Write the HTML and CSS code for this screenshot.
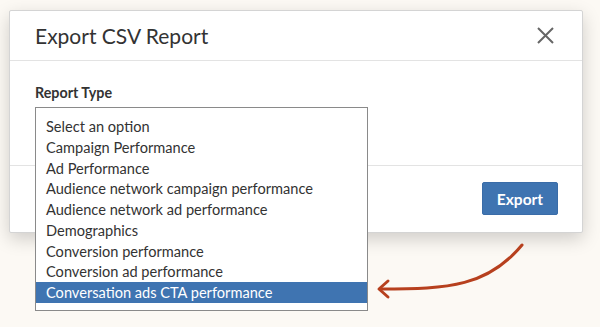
FILE: index.html
```html
<!DOCTYPE html>
<html>
<head>
<meta charset="utf-8">
<link rel="stylesheet" href="styles.css">
</head>
<body>
<div class="modal">
  <div class="modal-header">
    <h1 class="modal-title">Export CSV Report</h1>
    <button class="close" aria-label="Close">
      <svg width="17" height="17" viewBox="0 0 17 17"><path d="M1 1 L16 16 M16 1 L1 16" stroke="#666" stroke-width="2" fill="none"/></svg>
    </button>
  </div>
  <div class="modal-body">
    <label class="field-label">Report Type</label>
    <div class="listbox">
      <div class="option">Select an option</div>
      <div class="option">Campaign Performance</div>
      <div class="option">Ad Performance</div>
      <div class="option">Audience network campaign performance</div>
      <div class="option">Audience network ad performance</div>
      <div class="option">Demographics</div>
      <div class="option">Conversion performance</div>
      <div class="option">Conversion ad performance</div>
      <div class="option selected">Conversation ads CTA performance</div>
    </div>
  </div>
  <div class="modal-footer">
    <button class="btn-primary">Export</button>
  </div>
</div>
<svg class="arrow" width="600" height="327" viewBox="0 0 600 327">
  <path d="M522 245 C 488 286, 450 289, 380 289" stroke="#b7401e" stroke-width="3" fill="none" stroke-linecap="round"/>
  <path d="M388 281 L379 289 L388 297" stroke="#b7401e" stroke-width="3" fill="none" stroke-linecap="round" stroke-linejoin="round"/>
</svg>
</body>
</html>
```

FILE: styles.css
```css
* { box-sizing: border-box; }
html, body { margin: 0; padding: 0; }
body {
  background: #fcf9f4;
  width: 600px;
  height: 327px;
  overflow: hidden;
  font-family: Lato, "Open Sans", sans-serif;
  color: #333;
  position: relative;
  padding: 10px 0 0 9px;
}
.modal {
  width: 574px;
  height: 223px;
  background: #fff;
  border: 1px solid #d4d4d4;
  border-radius: 2px;
  box-shadow: 0 6px 18px rgba(0,0,0,0.18);
  display: flex;
  flex-direction: column;
}
.modal-header {
  height: 50px;
  border-bottom: 1px solid #e3e3e3;
  display: flex;
  align-items: center;
  justify-content: space-between;
  padding: 0 28px 0 25px;
}
.modal-title {
  margin: 0;
  font-size: 21px;
  font-weight: 400;
  color: #333;
  letter-spacing: 0;
}
.close {
  border: 0;
  background: none;
  padding: 0;
  width: 17px;
  height: 17px;
  display: flex;
}
.modal-body {
  height: 105px;
  border-bottom: 1px solid #e3e3e3;
  padding: 24px 25px 0;
  position: relative;
}
.field-label {
  display: block;
  font-size: 14.3px;
  font-weight: 700;
  color: #333;
  line-height: 16px;
}
.listbox {
  position: absolute;
  left: 25px;
  top: 46px;
  width: 333px;
  background: #fff;
  border: 1px solid #8a8a8a;
  padding: 8px 0 7px;
  z-index: 2;
}
.option {
  height: 20.75px;
  line-height: 22px;
  font-size: 14.6px;
  padding-left: 10px;
  color: #333;
  white-space: nowrap;
}
.option.selected {
  background: #3f74b1;
  color: #fff;
}
.modal-footer {
  flex: 1;
  display: flex;
  justify-content: flex-end;
  align-items: flex-start;
  padding: 16px 24px 0 0;
}
.btn-primary {
  width: 76px;
  height: 33px;
  background: #3f74b1;
  border: 1px solid #3a6ca8;
  border-radius: 2px;
  color: #fff;
  font-family: Lato, sans-serif;
  font-weight: 700;
  font-size: 15.5px;
  padding: 0;
}
.arrow {
  position: absolute;
  left: 0;
  top: 0;
  pointer-events: none;
  z-index: 3;
}
```
